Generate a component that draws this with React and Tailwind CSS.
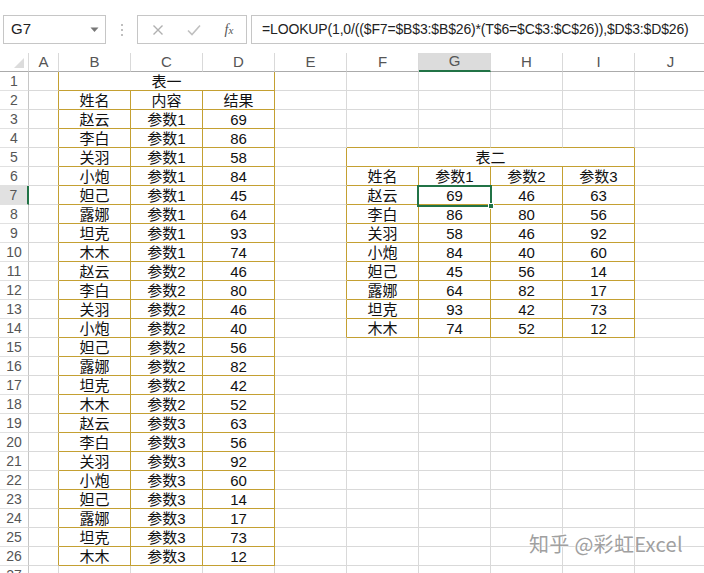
import React from "react";

const COLS = [29, 30, 72, 72, 72, 72, 72, 72, 72, 72, 72];
const LETTERS = ["", "A", "B", "C", "D", "E", "F", "G", "H", "I", "J"];
const NAMES = ["赵云", "李白", "关羽", "小炮", "妲己", "露娜", "坦克", "木木"];
const P1 = [69, 86, 58, 84, 45, 64, 93, 74];
const P2 = [46, 80, 46, 40, 56, 82, 42, 52];
const P3 = [63, 56, 92, 60, 14, 17, 73, 12];
const PS = [P1, P2, P3];

function inTable(r, c) {
  if (r >= 1 && r <= 26 && c >= 2 && c <= 4) return true;
  if (r >= 5 && r <= 14 && c >= 6 && c <= 9) return true;
  return false;
}

function content(r, c) {
  if (r === 1 && c === 2) return "表一";
  if (r === 2) {
    if (c === 2) return "姓名";
    if (c === 3) return "内容";
    if (c === 4) return "结果";
  }
  if (r >= 3 && r <= 26) {
    const i = r - 3;
    const g = Math.floor(i / 8);
    const k = i % 8;
    if (c === 2) return NAMES[k];
    if (c === 3) return "参数" + (g + 1);
    if (c === 4) return String(PS[g][k]);
  }
  if (r === 5 && c === 6) return "表二";
  if (r === 6) {
    if (c === 6) return "姓名";
    if (c === 7) return "参数1";
    if (c === 8) return "参数2";
    if (c === 9) return "参数3";
  }
  if (r >= 7 && r <= 14) {
    const k = r - 7;
    if (c === 6) return NAMES[k];
    if (c >= 7 && c <= 9) return String(PS[c - 7][k]);
  }
  return "";
}

function Row({ r }) {
  const cells = [];
  const active = r === 7;
  cells.push(
    <div
      key="h"
      className={
        "shrink-0 h-[19px] w-[29px] flex items-center justify-center text-[14px] text-[#555] border-b border-b-[#e1e1e1] " +
        (active
          ? "bg-[#e1e1e1] border-r-2 border-r-[#217346]"
          : "bg-white border-r border-r-[#c6c6c6]")
      }
    >
      {r}
    </div>
  );
  let c = 1;
  while (c < COLS.length) {
    let span = 1;
    if (r === 1 && c === 2) span = 3;
    if (r === 5 && c === 6) span = 4;
    let w = 0;
    for (let j = c; j < c + span; j++) w += COLS[j];
    const last = c + span - 1;
    const rightGold = inTable(r, last) || inTable(r, last + 1);
    const bottomGold = inTable(r, c) || inTable(r + 1, c);
    cells.push(
      <div
        key={c}
        style={{ width: w }}
        className={
          "shrink-0 h-[19px] border-r border-b flex items-center justify-center text-[15px] text-[#111] leading-none " +
          (rightGold ? "border-r-[#c4a032] " : "border-r-[#d9d9d9] ") +
          (bottomGold ? "border-b-[#c4a032]" : "border-b-[#d9d9d9]")
        }
      >
        {content(r, c)}
      </div>
    );
    c += span;
  }
  return <div className="flex">{cells}</div>;
}

export default function App() {
  const rows = [];
  for (let r = 1; r <= 27; r++) rows.push(<Row key={r} r={r} />);
  return (
    <div className="w-[704px] h-[573px] overflow-hidden bg-white relative font-['Liberation_Sans','Noto_Sans_CJK_SC',sans-serif]">
      {/* formula bar */}
      <div className="flex items-center h-[29px] mt-[15px]">
        <div className="ml-[3px] w-[103px] h-[29px] border border-[#c6c6c6] flex items-center justify-between pl-[7px] pr-[6px] shrink-0">
          <span className="text-[15px] text-[#222]">G7</span>
          <svg width="9" height="6" viewBox="0 0 9 6">
            <path d="M0.5 0.5 L8.5 0.5 L4.5 5 Z" fill="#777" />
          </svg>
        </div>
        <div className="w-[31px] flex justify-center shrink-0">
          <svg width="4" height="14" viewBox="0 0 4 14">
            <circle cx="2" cy="2" r="1" fill="#aaa" />
            <circle cx="2" cy="7" r="1" fill="#aaa" />
            <circle cx="2" cy="12" r="1" fill="#aaa" />
          </svg>
        </div>
        <div className="w-[110px] h-[29px] border border-[#c6c6c6] flex items-center shrink-0">
          <div className="w-[36px] flex justify-center ml-[2px]">
            <svg width="12" height="12" viewBox="0 0 12 12">
              <path d="M1.5 1.5 L10.5 10.5 M10.5 1.5 L1.5 10.5" stroke="#b0b0b0" strokeWidth="1.4" />
            </svg>
          </div>
          <div className="w-[36px] flex justify-center">
            <svg width="14" height="12" viewBox="0 0 14 12">
              <path d="M1 6.5 L5 10.5 L13 1.5" stroke="#c0c0c0" strokeWidth="1.6" fill="none" />
            </svg>
          </div>
          <div className="w-[34px] flex justify-center">
            <span className="font-['Liberation_Serif',serif] italic text-[14px] text-[#555]">
              f<span className="text-[11px]">x</span>
            </span>
          </div>
        </div>
        <div className="ml-[4px] flex-1 h-[29px] border border-[#c6c6c6] border-r-0 flex items-center pl-[10px] overflow-hidden whitespace-nowrap">
          <span className="text-[14px] text-[#222] tracking-[-0.15px]">
            =LOOKUP(1,0/(($F7=$B$3:$B$26)*(T$6=$C$3:$C$26)),$D$3:$D$26)
          </span>
        </div>
      </div>

      {/* sheet */}
      <div className="mt-[9px] relative">
        {/* column headers */}
        <div className="flex">
          <div className="shrink-0 w-[29px] h-[19px] border-r border-r-[#d9d9d9] border-b border-b-[#ababab] flex items-end justify-end pr-[4px] pb-[3px]">
            <svg width="10" height="10" viewBox="0 0 10 10">
              <path d="M10 0 L10 10 L0 10 Z" fill="#dcdcdc" />
            </svg>
          </div>
          {COLS.slice(1).map((w, i) => {
            const c = i + 1;
            const active = c === 7;
            return (
              <div
                key={c}
                style={{ width: w }}
                className={
                  "shrink-0 h-[19px] flex items-center justify-center text-[15px] text-[#555] border-r border-r-[#d9d9d9] " +
                  (active
                    ? "bg-[#dcdcdc] border-b-2 border-b-[#217346]"
                    : "bg-white border-b border-b-[#ababab]")
                }
              >
                {LETTERS[c]}
              </div>
            );
          })}
        </div>
        {rows}

        {/* selection G7 */}
        <div className="absolute left-[417px] top-[132px] w-[75px] h-[22px] border-2 border-[#217346] pointer-events-none" />
        <div className="absolute left-[488px] top-[150px] w-[6px] h-[6px] bg-[#217346] border border-white" />
      </div>

      {/* watermark */}
      <div className="absolute left-[529px] top-[529px] text-[20px] tracking-[0.3px] text-[#a0a0a0] font-['Noto_Sans_CJK_SC',sans-serif] [text-shadow:0_0_2px_#fff,0_0_2px_#fff] whitespace-nowrap">
        知乎 @彩虹Excel
      </div>
    </div>
  );
}
